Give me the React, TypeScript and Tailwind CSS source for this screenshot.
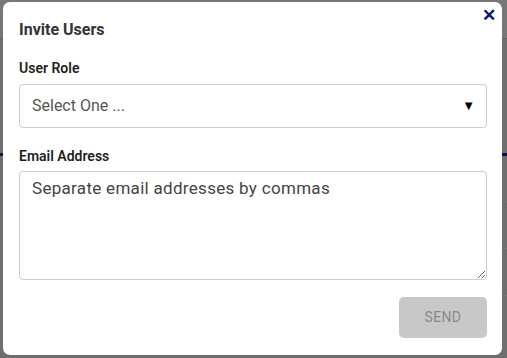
const font = { fontFamily: 'Roboto, "Liberation Sans", sans-serif' };

export default function App() {
  return (
    <div className="relative w-[507px] h-[358px] overflow-hidden bg-[#6e6e6e]" style={font}>
      {/* dimmed page behind the dialog */}
      <div className="flex flex-col">
        <div className="h-[39px] bg-[#777777] border-b border-[#666]" />
        <div className="h-[114px]" />
        <div className="h-[3px] bg-[#0b0f4a]" />
        <div className="h-[46px] border-b border-[#747474]" />
        <div className="h-[47px] border-b border-[#747474]" />
        <div className="h-[47px] border-b border-[#747474]" />
      </div>

      {/* dialog */}
      <div className="absolute left-[3px] top-[2px] w-[499px] h-[353px] bg-white rounded-[7px] pl-4 pr-[15px] flex flex-col">
        <button className="absolute right-[6px] top-[5px] text-[#0d1775] text-[17px] font-black leading-none">✕</button>
        <h2 className="mt-[18px] text-[16px] font-bold text-[#333] leading-5">Invite Users</h2>

        <label className="mt-[20px] text-[14px] font-semibold text-[#222] leading-4">User Role</label>
        <div className="mt-[8px] h-[44px] border border-[#ccc] rounded-[4px] flex items-center justify-between pl-3 pr-[11px]">
          <span className="text-[16px] text-[#555]">Select One ...</span>
          <span className="text-[13px] text-black">▼</span>
        </div>

        <label className="mt-[20px] text-[14px] font-semibold text-[#222] leading-4">Email Address</label>
        <textarea
          className="mt-[7px] h-[109px] border border-[#ccc] rounded-[4px] px-3 py-[4px] text-[17px] tracking-[0.3px] text-[#444] placeholder:text-[#444] outline-none"
          placeholder="Separate email addresses by commas"
        />

        <div className="mt-[17px] flex justify-end">
          <button className="w-[88px] h-[41px] rounded-[5px] bg-[#c8c8c8] text-[#888] text-[14px] tracking-wide">SEND</button>
        </div>
      </div>
    </div>
  );
}
